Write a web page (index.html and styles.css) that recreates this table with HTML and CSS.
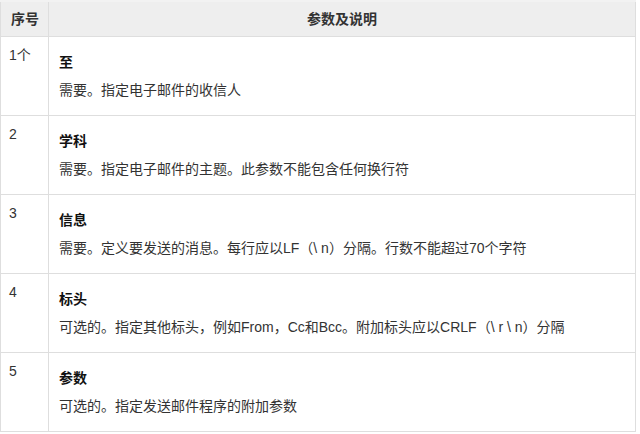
FILE: index.html
```html
<!DOCTYPE html>
<html>
  <head>
    <meta charset="utf-8">
    <title>mail() 参数</title>
    <link rel="stylesheet" href="styles.css">
  </head>
  <body>
    <table class="params">
      <thead>
        <tr>
          <th class="num">序号</th>
          <th>参数及说明</th>
        </tr>
      </thead>
      <tbody>
        <tr>
          <td class="num">1个</td>
          <td class="desc">
            <p class="name">至</p>
            <p>需要。指定电子邮件的收信人</p>
          </td>
        </tr>
        <tr>
          <td class="num">2</td>
          <td class="desc">
            <p class="name">学科</p>
            <p>需要。指定电子邮件的主题。此参数不能包含任何换行符</p>
          </td>
        </tr>
        <tr>
          <td class="num">3</td>
          <td class="desc">
            <p class="name">信息</p>
            <p>需要。定义要发送的消息。每行应以LF（\ n）分隔。行数不能超过70个字符</p>
          </td>
        </tr>
        <tr>
          <td class="num">4</td>
          <td class="desc">
            <p class="name">标头</p>
            <p>可选的。指定其他标头，例如From，Cc和Bcc。附加标头应以CRLF（\ r \ n）分隔</p>
          </td>
        </tr>
        <tr>
          <td class="num">5</td>
          <td class="desc">
            <p class="name">参数</p>
            <p>可选的。指定发送邮件程序的附加参数</p>
          </td>
        </tr>
      </tbody>
    </table>
  </body>
</html>
```

FILE: styles.css
```css
body {
  margin: 0;
  padding: 0;
  background-color: #fff;
  color: #333;
  font-family: 'Liberation Sans', 'Noto Sans CJK SC', sans-serif;
  font-size: 14px;
}
.params {
  width: 636px;
  border-collapse: collapse;
  border-top: 2px solid #f2f2f2;
}
.params th,
.params td {
  border: 1px solid #dedede;
  line-height: 20px;
  text-align: left;
  vertical-align: top;
}
.params th {
  background-color: #eeeeee;
  color: #333;
  font-weight: bold;
  text-align: center;
  padding: 7px 10px 7px;
  height: 20px;
}
.params th.num {
  width: 30px;
  padding: 7px 8px 7px 9px;
}
.params td.num {
  padding: 8px 8px 0 8px;
}
.params td.desc {
  padding: 15px 10px 15px;
}
.params p {
  margin: 0;
}
.params p.name {
  font-weight: bold;
  color: #111;
  margin-bottom: 8px;
}
```
